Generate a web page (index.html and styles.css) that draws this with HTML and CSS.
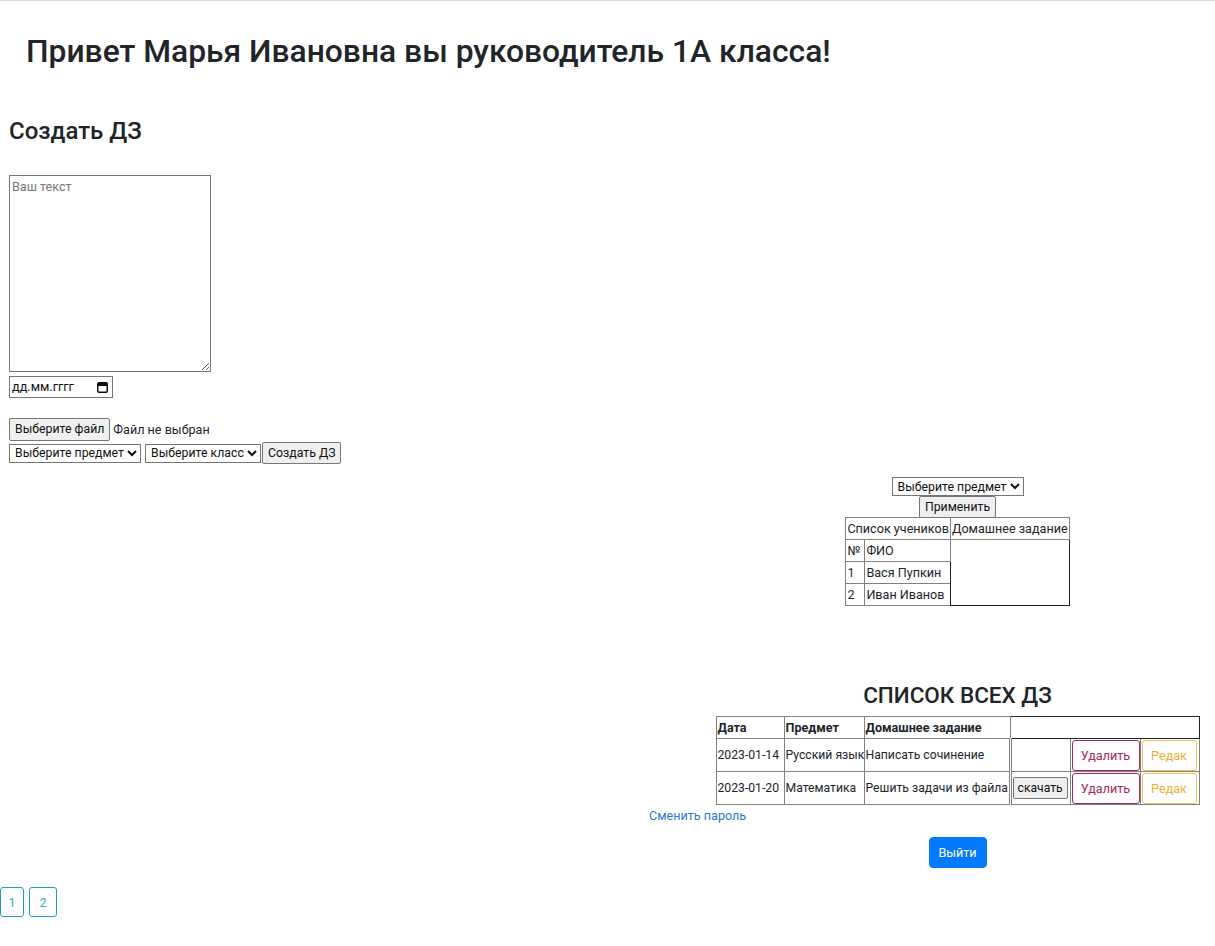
FILE: index.html
```html
<!DOCTYPE html>
<html lang="ru">
<head>
<meta charset="utf-8">
<title>Кабинет учителя</title>
<link rel="stylesheet" href="styles.css">
</head>
<body>
<header class="top">
  <h1 class="greeting">Привет Марья Ивановна вы руководитель 1А класса!</h1>
</header>

<section class="create">
  <h2 class="create-title">Создать ДЗ</h2>
  <form class="hw-form">
    <textarea class="hw-text" placeholder="Ваш текст"></textarea>
    <div class="date-input">
      <span class="date-text">дд.мм.гггг</span>
      <svg class="cal-icon" width="11" height="12" viewBox="0 0 11 12" aria-hidden="true">
        <rect x="0.75" y="1.75" width="9.5" height="9.5" rx="1.2" fill="none" stroke="#111" stroke-width="1.5"/>
        <rect x="1" y="2" width="9" height="3" fill="#111"/>
      </svg>
    </div>
    <div class="file-row">
      <button type="button" class="ctl-btn file-btn">Выберите файл</button>
      <span class="file-name">Файл не выбран</span>
    </div>
    <div class="select-row">
      <select class="ctl-select"><option>Выберите предмет</option></select>
      <select class="ctl-select select-class"><option>Выберите класс</option></select>
      <button type="button" class="ctl-btn create-btn">Создать ДЗ</button>
    </div>
  </form>
</section>

<section class="board">
  <div class="right-col filter">
    <select class="ctl-select"><option>Выберите предмет</option></select>
    <div><button type="button" class="ctl-btn apply-btn">Применить</button></div>
    <table class="students">
      <tr><td colspan="2">Список учеников</td><td>Домашнее задание</td></tr>
      <tr><td class="num">№</td><td class="fio">ФИО</td><td class="hw-cell" rowspan="3"></td></tr>
      <tr><td class="num">1</td><td class="fio">Вася Пупкин</td></tr>
      <tr><td class="num">2</td><td class="fio">Иван Иванов</td></tr>
    </table>
  </div>

  <div class="right-col all-hw">
    <h2 class="list-title">СПИСОК ВСЕХ ДЗ</h2>
    <table class="hw-table">
      <colgroup>
        <col class="w-date"><col class="w-subj"><col class="w-task">
        <col class="w-file"><col class="w-del"><col class="w-edit">
      </colgroup>
      <tr>
        <th>Дата</th>
        <th>Предмет</th>
        <th>Домашнее задание</th>
        <th class="c-actions" colspan="3"></th>
      </tr>
      <tr>
        <td>2023-01-14</td>
        <td>Русский язык</td>
        <td>Написать сочинение</td>
        <td class="c-file"></td>
        <td class="c-btn"><button type="button" class="btn-del">Удалить</button></td>
        <td class="c-btn"><button type="button" class="btn-edit">Редак</button></td>
      </tr>
      <tr>
        <td>2023-01-20</td>
        <td>Математика</td>
        <td>Решить задачи из файла</td>
        <td class="c-file"><button type="button" class="ctl-btn dl-btn">скачать</button></td>
        <td class="c-btn"><button type="button" class="btn-del">Удалить</button></td>
        <td class="c-btn"><button type="button" class="btn-edit">Редак</button></td>
      </tr>
    </table>
  </div>
</section>

<div class="pass-row"><a class="pass-link" href="#">Сменить пароль</a></div>

<section class="board">
  <div class="right-col logout">
    <button type="button" class="btn-exit">Выйти</button>
  </div>
</section>

<nav class="pager">
  <button type="button" class="page-btn">1</button>
  <button type="button" class="page-btn">2</button>
</nav>
</body>
</html>
```

FILE: styles.css
```css
* { box-sizing: border-box; }

html, body { margin: 0; padding: 0; }

body {
  font-family: Roboto, "Noto Sans", "Liberation Sans", sans-serif;
  font-size: 12.6px;
  line-height: 18px;
  color: #212529;
  background: #fff;
  border-top: 1px solid #dcdcdc;
  width: 1215px;
  min-height: 946px;
}

.greeting {
  margin: 31px 0 0 26px;
  font-size: 31.8px;
  line-height: 38px;
  font-weight: 500;
}

.create { padding-left: 9px; }

.create-title {
  margin: 47px 0 0 0;
  font-size: 24px;
  line-height: 29px;
  font-weight: 500;
}

.hw-form { margin-top: 29px; }

.hw-text {
  display: block;
  width: 202px;
  height: 197px;
  margin: 0;
  padding: 2px;
  border: 1px solid #767676;
  font-family: Roboto, "Noto Sans", sans-serif;
  font-size: 12.6px;
  line-height: 18px;
  color: #212529;
  resize: both;
}
.hw-text::placeholder { color: #757575; }

.date-input {
  margin-top: 4px;
  width: 104px;
  height: 22px;
  border: 1px solid #767676;
  display: flex;
  align-items: center;
  justify-content: space-between;
  padding: 0 4px 0 2px;
  font-size: 12.6px;
  color: #111;
}
.cal-icon { display: block; }

.ctl-btn {
  font-family: Roboto, "Noto Sans", sans-serif;
  font-size: 12.3px;
  line-height: 17px;
  color: #111;
  background: #efefef;
  border: 1px solid #767676;
  border-radius: 2px;
  padding: 2px 5px;
  margin: 0;
}

.file-row {
  margin-top: 20px;
  display: flex;
  align-items: center;
  gap: 3px;
}
.file-btn { height: 23px; }
.file-name { color: #212529; }

.select-row {
  margin-top: 1px;
  display: flex;
  align-items: center;
}
.ctl-select {
  font-family: Roboto, "Noto Sans", sans-serif;
  font-size: 12.3px;
  color: #111;
  height: 19px;
  border: 1px solid #767676;
  border-radius: 0;
  background: #fff;
  margin: 0;
  padding: 0 0 0 1px;
}
.select-class { margin-left: 4px; }
.create-btn { height: 22px; margin-left: 1px; }

.board {
  display: grid;
  grid-template-columns: 1fr 515px;
}
.right-col {
  grid-column: 2;
  text-align: center;
}

.filter { margin-top: 13px; }
.apply-btn { height: 22px; }

.students {
  margin: -1px auto 0;
  border-collapse: collapse;
  text-align: left;
}
.students td {
  border: 1px solid #808080;
  padding: 1px;
  height: 22px;
  white-space: nowrap;
}
.students .num { width: 19px; }
.students .hw-cell { border: 1px solid #222; }

.all-hw { margin-top: 75px; }
.list-title {
  margin: 0 0 6px 0;
  font-size: 22.5px;
  line-height: 29px;
  font-weight: 500;
}

.hw-table {
  margin: 0 auto;
  width: 483px;
  table-layout: fixed;
  border-collapse: collapse;
  text-align: left;
  font-size: 12.2px;
}
.w-date { width: 68px; }
.w-subj { width: 80px; }
.w-task { width: 146px; }
.w-file { width: 60px; }
.w-del { width: 70px; }
.w-edit { width: 59px; }

.hw-table th, .hw-table td {
  border: 1px solid #808080;
  padding: 1px;
  white-space: nowrap;
}
.hw-table th { height: 22px; font-weight: 700; font-size: 12.6px; }
.hw-table td { height: 33px; }
.hw-table .c-actions { border: 1px solid #222; }
.hw-table .c-file { border-left: 3px double #808080; }
.hw-table .c-btn { padding: 0 1px; }

.btn-del, .btn-edit {
  font-family: Roboto, "Noto Sans", sans-serif;
  font-size: 12.6px;
  height: 31px;
  background: #fff;
  border-radius: 3px;
  padding: 0 8px;
  margin: 0;
  display: block;
}
.btn-del { width: 68px; color: #a8285b; border: 1px solid #a8285b; }
.btn-edit { width: 55px; color: #f0b030; border: 1px solid #eec357; }
.dl-btn { height: 22px; padding: 1px 4px; font-size: 12.2px; }

.pass-row {
  padding-left: 649px;
  margin-top: 2px;
}
.pass-link {
  color: #2a7ad4;
  text-decoration: none;
  font-size: 12.6px;
}

.logout { margin-top: 12px; }
.btn-exit {
  font-family: Roboto, "Noto Sans", sans-serif;
  font-size: 12.6px;
  color: #fff;
  background: #007bff;
  border: 1px solid #007bff;
  border-radius: 4px;
  width: 58px;
  height: 31px;
  padding: 0;
}

.pager {
  margin-top: 19px;
  display: flex;
  gap: 5px;
}
.page-btn {
  font-family: Roboto, "Noto Sans", sans-serif;
  font-size: 12.6px;
  color: #3aaabb;
  background: #fff;
  border: 1px solid #17a2b8;
  border-radius: 3px;
  height: 30px;
  padding: 0;
  margin: 0;
}
.page-btn:first-child { width: 24px; }
.page-btn:last-child { width: 28px; }
```
